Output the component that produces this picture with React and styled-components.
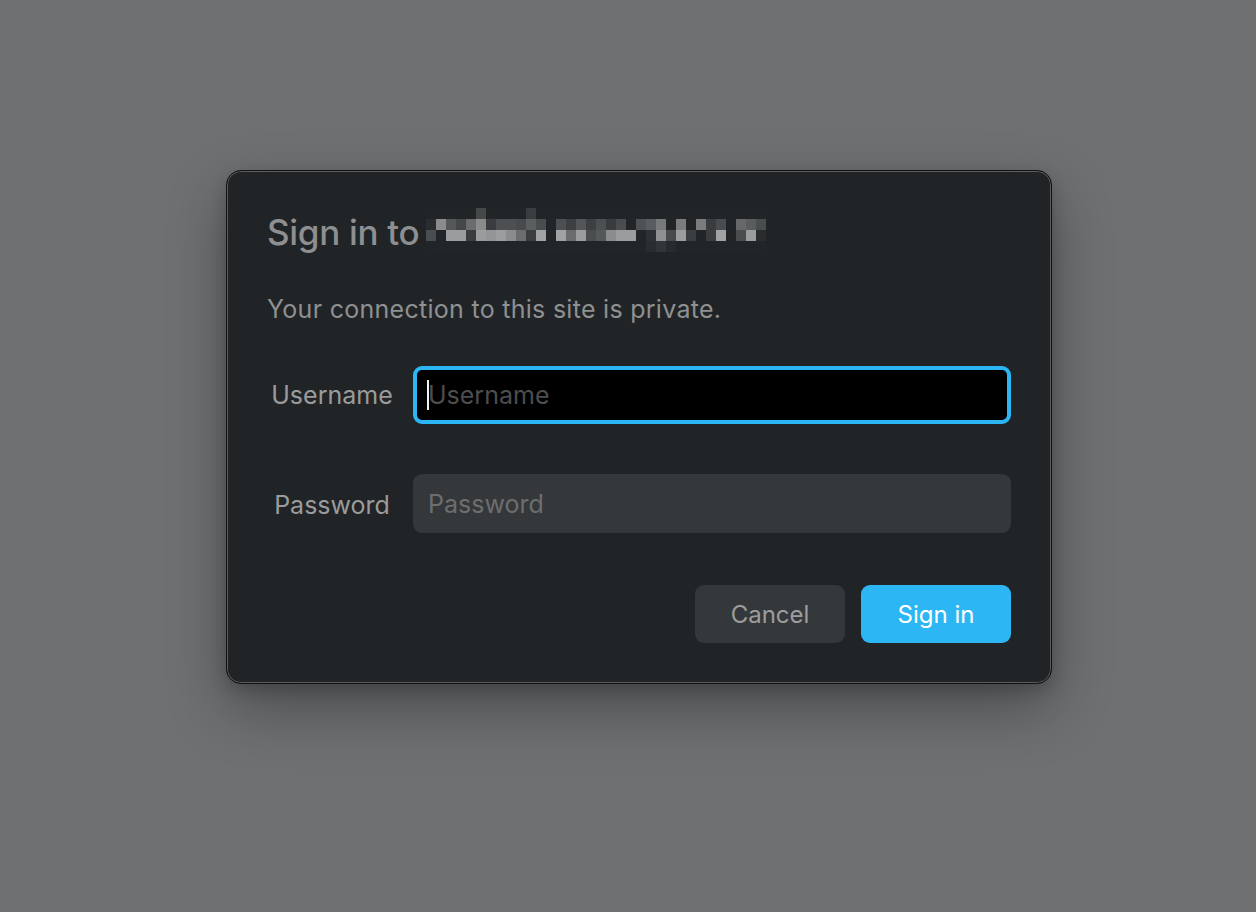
import React from 'react';
import styled, { createGlobalStyle } from 'styled-components';

const GlobalStyle = createGlobalStyle`
  html, body {
    margin: 0;
    padding: 0;
    background: #6f7072;
  }
  body {
    font-family: Inter, "Noto Sans", "Liberation Sans", sans-serif;
    -webkit-font-smoothing: antialiased;
  }
`;

const Page = styled.div`
  min-height: 912px;
  box-sizing: border-box;
  padding: 170px 0 0 226px;
`;

const Dialog = styled.div`
  width: 826px;
  box-sizing: border-box;
  padding: 41px 40px 40px;
  background: #212426;
  border: 1px solid #101112;
  border-radius: 15px;
  box-shadow: inset 0 0 0 1px #5b5c5e, 0 24px 60px rgba(0, 0, 0, 0.32), 0 6px 16px rgba(0, 0, 0, 0.18);
`;

const Title = styled.h1`
  display: flex;
  align-items: center;
  gap: 7px;
  margin: 0;
  height: 40px;
  font-size: 35px;
  line-height: 40px;
  font-weight: 500;
  color: #8d8f91;
  letter-spacing: -0.3px;
`;

const Host = styled.svg`
  flex: none;
  margin-top: -4px;
`;

const Subtitle = styled.p`
  margin: 42px 0 0;
  font-size: 25px;
  line-height: 30px;
  color: #8e9092;
  letter-spacing: 0.28px;
`;

const Form = styled.div`
  display: grid;
  grid-template-columns: 130px 1fr;
  column-gap: 16px;
  row-gap: 50px;
  margin-top: 42px;
  align-items: center;
`;

const Label = styled.label`
  text-align: center;
  font-size: 25px;
  line-height: 30px;
  color: #9a9b9c;
  padding-top: ${p => (p.$lower ? '3px' : '0')};
`;

const FieldWrap = styled.div`
  position: relative;
  height: ${p => (p.$tall ? '59px' : '58px')};
`;

const Field = styled.input`
  width: 100%;
  height: 100%;
  box-sizing: border-box;
  border-radius: 9px;
  font-family: inherit;
  font-size: 25px;
  outline: none;
  caret-color: transparent;
  border: ${p => (p.$focused ? '4px solid #2bb5f3' : 'none')};
  background: ${p => (p.$focused ? '#000' : '#35383a')};
  padding: ${p => (p.$focused ? '0 0 0 11px' : '0 0 0 15px')};
  color: #e0e0e0;
  &::placeholder {
    color: ${p => (p.$focused ? '#4c4d4e' : '#6c6e70')};
  }
`;

const Caret = styled.span`
  position: absolute;
  left: 14px;
  top: 14px;
  width: 2px;
  height: 30px;
  background: #f2f2f2;
`;

const Actions = styled.div`
  display: flex;
  justify-content: flex-end;
  gap: 16px;
  margin-top: 52px;
`;

const Button = styled.button`
  width: 150px;
  height: 58px;
  border: none;
  border-radius: 9px;
  font-family: inherit;
  font-size: 24px;
  background: ${p => (p.$primary ? '#2cb6f4' : '#35383a')};
  color: ${p => (p.$primary ? '#ffffff' : '#9c9d9e')};
`;

const BG = '#222527';

// pixelated host name, 10px columns x 11px rows
const rows = [
  { y: 0, c: { 5: '#454849', 10: '#3a3d3f' } },
  {
    y: 11,
    c: {
      0: '#2a2d2f', 1: '#8a8c8d', 2: '#555859', 3: '#45484a', 4: '#6a6c6d', 5: '#8a8c8c',
      6: '#3a3d3f', 7: '#4d5052', 8: '#4d5052', 9: '#484b4d', 10: '#5c5f60', 11: '#4a4d4f',
      13: '#4d5052', 14: '#3d4042', 15: '#545759', 16: '#3d4042', 17: '#4d5052', 18: '#393c3e',
      19: '#4a4d4f', 21: '#4f5254', 22: '#5a5d5f', 23: '#777a7b', 25: '#7a7c7d', 27: '#7a7c7d',
      28: '#3a3d3f', 29: '#4a4d4f', 31: '#666869', 32: '#5a5d5e', 33: '#4a4d4f',
    },
  },
  {
    y: 22,
    c: {
      0: '#4a4d4f', 2: '#9a9c9d', 3: '#9a9c9d', 4: '#3a3d3f', 5: '#9a9c9d', 6: '#939596',
      7: '#9b9d9e', 8: '#8a8c8d', 9: '#6a6c6d', 10: '#3a3d3f', 11: '#a0a2a3', 13: '#a0a2a3',
      14: '#6a6c6e', 15: '#9a9c9d', 16: '#4a4d4f', 17: '#555859', 18: '#8a8c8d', 19: '#9a9c9d',
      20: '#9a9c9d', 22: '#2e3133', 23: '#8e9091', 24: '#484b4d', 25: '#9a9c9d', 26: '#3a3d3f',
      28: '#3a3d3f', 29: '#a0a2a3', 31: '#4a4d4f', 32: '#9a9c9d', 33: '#2a2d2f',
    },
  },
  { y: 33, c: { 22: '#2a2d2f', 23: '#333638', 24: '#282b2d' } },
];

function PixelHost() {
  return (
    <Host width="340" height="44" viewBox="0 0 340 44">
      {rows.map(r =>
        Array.from({ length: 34 }).map((_, i) => (
          <rect key={r.y + '-' + i} x={i * 10} y={r.y} width="10" height="11" fill={r.c[i] || BG} />
        ))
      )}
    </Host>
  );
}

export default function App() {
  return (
    <>
      <GlobalStyle />
      <Page>
        <Dialog>
          <Title>
            Sign in to
            <PixelHost />
          </Title>
          <Subtitle>Your connection to this site is private.</Subtitle>
          <Form>
            <Label htmlFor="user">Username</Label>
            <FieldWrap>
              <Field id="user" $focused placeholder="Username" />
              <Caret />
            </FieldWrap>
            <Label htmlFor="pass" $lower>Password</Label>
            <FieldWrap $tall>
              <Field id="pass" type="password" placeholder="Password" />
            </FieldWrap>
          </Form>
          <Actions>
            <Button>Cancel</Button>
            <Button $primary>Sign in</Button>
          </Actions>
        </Dialog>
      </Page>
    </>
  );
}
